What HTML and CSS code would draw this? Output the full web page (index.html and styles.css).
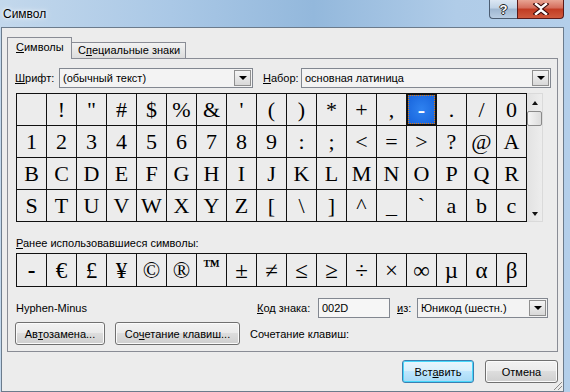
FILE: index.html
```html
<!DOCTYPE html>
<html lang="ru">
<head>
    <meta charset="UTF-8">
    <title>Символ</title>
    <link rel="stylesheet" href="styles.css">
</head>
<body>
<div class="window">
    <!-- Заголовок окна -->
    <div class="titlebar">
        <span class="title">Символ</span>
        <div class="caption">
            <div class="cap-btn help">?</div>
            <div class="cap-btn close">
                <svg width="16" height="12" viewBox="0 0 16 12">
                    <path d="M3 1 L8 5 L13 1 M3 11 L8 7 L13 11" fill="none" stroke="#3a0a0a" stroke-width="4.6" stroke-linecap="square"/>
                    <path d="M3 1 L8 5 L13 1 M3 11 L8 7 L13 11" fill="none" stroke="#fff" stroke-width="2.4" stroke-linecap="square"/>
                </svg>
            </div>
        </div>
    </div>

    <div class="client">
        <div class="tabs">
            <div class="tab active"><u>С</u>имволы</div>
            <div class="tab">С<u>п</u>ециальные знаки</div>
        </div>

        <div class="panel">
            <div class="font-row">
                <span class="lbl lbl-font"><u>Ш</u>рифт:</span>
                <div class="combo combo-font">(обычный текст)<span class="drop"></span></div>
                <span class="lbl lbl-set"><u>Н</u>абор:</span>
                <div class="combo combo-set">основная латиница<span class="drop"></span></div>
            </div>

            <div class="grid-wrap">
                <div class="grid" id="grid"></div>
                <div class="scrollbar">
                    <span class="arrow up"></span>
                    <span class="thumb"></span>
                    <span class="arrow down"></span>
                </div>
            </div>

            <div class="recent-label"><u>Р</u>анее использовавшиеся символы:</div>
            <div class="grid recent" id="recent"></div>

            <div class="info-row">
                <span class="char-name">Hyphen-Minus</span>
                <span class="lbl lbl-code"><u>К</u>од знака:</span>
                <div class="field">002D</div>
                <span class="lbl lbl-from"><u>и</u>з:</span>
                <div class="combo combo-from">Юникод (шестн.)<span class="drop"></span></div>
            </div>

            <div class="btn-row">
                <div class="btn btn-auto">Ав<u>т</u>озамена...</div>
                <div class="btn btn-keys">Со<u>ч</u>етание клавиш...</div>
                <span class="keys-text">Сочетание клавиш:</span>
            </div>
        </div>

        <div class="footer">
            <div class="btn btn-insert">Вст<u>а</u>вить</div>
            <div class="btn btn-cancel">Отмена</div>
            <span class="grip"></span>
        </div>
    </div>
</div>

<script>
    // Символы таблицы (основная латиница)
    var chars = [" ", "!", "\"", "#", "$", "%", "&", "'", "(", ")", "*", "+", ",", "-", ".", "/", "0",
        "1", "2", "3", "4", "5", "6", "7", "8", "9", ":", ";", "<", "=", ">", "?", "@", "A",
        "B", "C", "D", "E", "F", "G", "H", "I", "J", "K", "L", "M", "N", "O", "P", "Q", "R",
        "S", "T", "U", "V", "W", "X", "Y", "Z", "[", "\\", "]", "^", "_", "`", "a", "b", "c"];
    var recent = ["-", "€", "£", "¥", "©", "®", "™", "±", "≠", "≤", "≥", "÷", "×", "∞", "µ", "α", "β"];

    function fill(id, list, selected) {
        var box = document.getElementById(id);
        for (var i = 0; i < list.length; i++) {
            var cell = document.createElement("div");
            cell.className = "cell";
            if (i === selected) {
                cell.className += " selected";
            }
            if (list[i] === "™") {
                cell.className += " tm";
            }
            cell.textContent = list[i];
            box.appendChild(cell);
        }
    }

    fill("grid", chars, 13);
    fill("recent", recent, -1);
</script>
</body>
</html>
```

FILE: styles.css
```css
* {
    box-sizing: border-box;
}

body {
    margin: 0;
    width: 570px;
    height: 392px;
    overflow: hidden;
    font-family: "Liberation Sans", Arial, sans-serif;
    font-size: 11px;
    color: #000;
}

u {
    text-decoration: underline;
    text-underline-offset: 1px;
}

/* Окно */
.window {
    width: 570px;
    height: 392px;
    display: flex;
    flex-direction: column;
    position: relative;
    background: linear-gradient(90deg, #c3d8ec 0%, #aac8e6 30%, #93b8dc 55%, #b0cce8 80%, #b4cfea 100%);
}

.titlebar {
    height: 27px;
    display: flex;
    flex-shrink: 0;
}

.title {
    padding: 7px 0 0 3px;
    font-size: 12px;
    text-shadow: 0 0 6px #fff, 0 0 3px #fff;
}

.caption {
    margin-left: auto;
    margin-right: 6px;
    display: flex;
    height: 19px;
}

.cap-btn {
    height: 19px;
    border: 1px solid #4c5d72;
    border-top: none;
    display: flex;
    align-items: center;
    justify-content: center;
}

.help {
    width: 28px;
    border-radius: 0 0 0 4px;
    border-right: none;
    background: linear-gradient(#dce7f3 0%, #c0d2e6 45%, #9fb7d1 50%, #b9cde3 100%);
    color: #fff;
    font-weight: bold;
    font-size: 13px;
    text-shadow: 1px 0 0 #222, -1px 0 0 #222, 0 1px 0 #222, 0 -1px 0 #222;
}

.close {
    width: 47px;
    border-radius: 0 0 4px 0;
    border-color: #5a1a1a;
    background: linear-gradient(#e8a493 0%, #d46c5a 45%, #c13b23 50%, #cf5a3e 100%);
}

/* Клиентская область */
.client {
    flex: 1;
    width: 563px;
    margin-left: 1px;
    background: #ececec;
    border: 1px solid #6b7b8c;
    padding: 9px 5px 0 5px;
    display: flex;
    flex-direction: column;
    position: relative;
}

.tabs {
    display: flex;
    align-items: flex-end;
    height: 21px;
    position: relative;
    z-index: 1;
}

.tab {
    height: 16px;
    border: 1px solid #898c95;
    border-bottom: none;
    border-left: none;
    background: linear-gradient(#f2f2f2, #dcdcdc);
    line-height: 15px;
    white-space: nowrap;
}

.tab.active {
    height: 22px;
    width: 65px;
    margin-bottom: -1px;
    border-left: 1px solid #898c95;
    background: #ececec;
    padding: 0 0 0 8px;
    line-height: 19px;
}

.tab:not(.active) {
    width: 114px;
    padding-left: 6px;
}

.panel {
    height: 294px;
    width: 551px;
    border: 1px solid #898c95;
    padding: 9px 0 0 7px;
}

.font-row,
.info-row {
    display: flex;
    align-items: center;
    height: 20px;
}

.lbl-font {
    width: 44px;
}

.lbl-set {
    width: 38px;
    margin-left: 10px;
}

.combo,
.field {
    height: 20px;
    border: 1px solid #828790;
    background: #f3f3f3;
    padding-left: 3px;
    line-height: 18px;
    position: relative;
    white-space: nowrap;
}

.combo-font {
    width: 194px;
}

.combo-set {
    width: 250px;
}

.drop {
    position: absolute;
    right: 1px;
    top: 1px;
    width: 17px;
    height: 16px;
    border: 1px solid #8f8f8f;
    background: linear-gradient(#f4f4f4, #d8d8d8);
}

.drop::after {
    content: "";
    position: absolute;
    left: 4px;
    top: 5px;
    border-left: 4px solid transparent;
    border-right: 4px solid transparent;
    border-top: 4px solid #000;
}

/* Таблица символов */
.grid-wrap {
    display: flex;
    margin: 5px 0 0 1px;
}

.grid {
    display: grid;
    grid-template-columns: repeat(17, 29px);
    grid-auto-rows: 31px;
    gap: 1px;
    background: #111;
    border: 1px solid #111;
    width: 511px;
}

.cell {
    background: #ececec;
    font-family: "Liberation Serif", "Times New Roman", serif;
    font-size: 22px;
    display: flex;
    align-items: center;
    justify-content: center;
    line-height: 1;
}

.cell.selected {
    background: radial-gradient(ellipse at center, #2f82f0 0%, #1c6ae0 70%, #1660d4 100%);
    color: #fff;
    font-weight: bold;
    outline: 1px dotted #e07a10;
    outline-offset: -2px;
    box-shadow: inset 0 0 0 1px #111;
}

.scrollbar {
    width: 16px;
    height: 129px;
    background: linear-gradient(90deg, #e2e2e2, #ededed);
    border: 1px solid #dadada;
    border-left: none;
    display: flex;
    flex-direction: column;
    align-items: center;
}

.arrow {
    width: 0;
    height: 0;
    border-left: 3.5px solid transparent;
    border-right: 3.5px solid transparent;
}

.arrow.up {
    margin-top: 7px;
    border-bottom: 4px solid #111;
}

.arrow.down {
    margin-top: auto;
    margin-bottom: 5px;
    border-top: 4px solid #111;
}

.thumb {
    width: 15px;
    height: 15px;
    margin-top: 6px;
    border: 1px solid #8a8a8a;
    border-radius: 2px;
    background: linear-gradient(90deg, #f4f4f4, #dcdcdc);
}

.recent-label {
    margin: 14px 0 0 1px;
    height: 16px;
    line-height: 15px;
}

.recent {
    margin: 1px 0 0 1px;
    grid-auto-rows: 32px;
}

.recent .cell {
    font-size: 23px;
}

.recent .cell:first-child {
    font-weight: bold;
}

.recent .cell.tm {
    font-size: 17px;
    font-weight: bold;
    align-items: flex-start;
    padding-top: 3px;
}

.info-row {
    margin-top: 11px;
}

.char-name {
    width: 242px;
    padding-left: 1px;
}

.lbl-code {
    width: 61px;
}

.field {
    width: 72px;
    background: #f6f6f6;
}

.lbl-from {
    width: 20px;
    margin-left: 7px;
}

.combo-from {
    width: 131px;
}

/* Кнопки */
.btn-row {
    display: flex;
    align-items: center;
    margin-top: 4px;
    height: 23px;
}

.btn {
    height: 23px;
    border: 1px solid #707070;
    border-radius: 3px;
    background: linear-gradient(#f2f2f2 0%, #ebebeb 45%, #dddddd 50%, #cfcfcf 100%);
    box-shadow: inset 0 0 0 1px #fbfbfb;
    display: flex;
    align-items: center;
    justify-content: center;
    white-space: nowrap;
}

.btn-auto {
    width: 90px;
}

.btn-keys {
    width: 125px;
    margin-left: 10px;
}

.keys-text {
    margin-left: 10px;
}

.footer {
    display: flex;
    justify-content: flex-end;
    margin-top: 8px;
}

.btn-insert {
    width: 72px;
    border-color: #3c7fb1;
    box-shadow: inset 0 0 0 1px #48d8fb;
    background: linear-gradient(#eaf6fd 0%, #d9f0fc 45%, #bee6fd 50%, #a7d9f5 100%);
}

.btn-cancel {
    width: 73px;
    margin-left: 11px;
}

.grip {
    position: absolute;
    right: 1px;
    bottom: 1px;
    width: 10px;
    height: 10px;
    background: linear-gradient(135deg, transparent 55%, #8a8a8a 55%, #8a8a8a 62%, transparent 62%, transparent 75%, #8a8a8a 75%, #8a8a8a 82%, transparent 82%);
}
```
